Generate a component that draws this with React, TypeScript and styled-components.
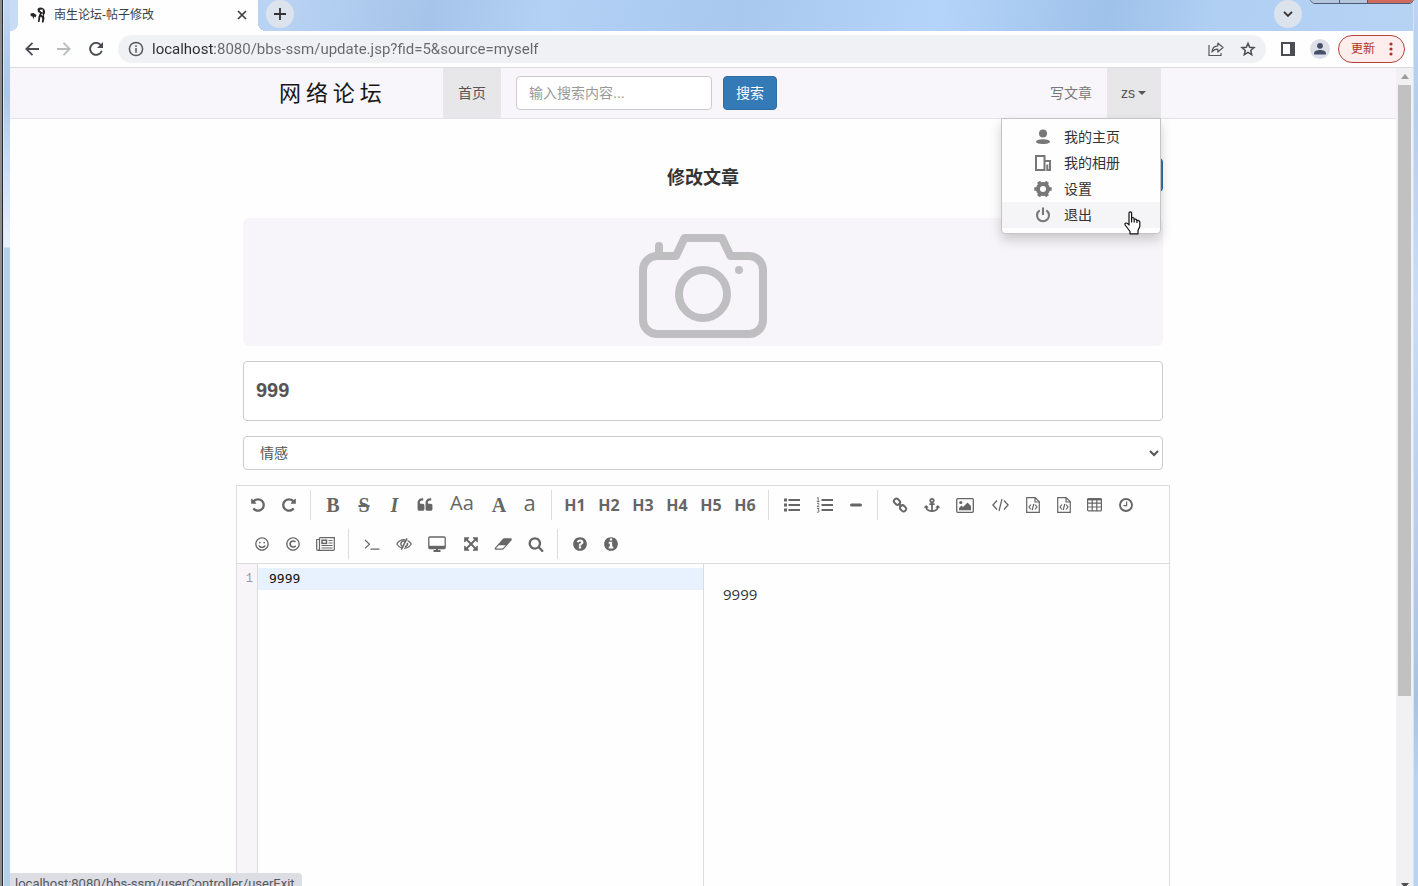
import React from "react";
import styled, { createGlobalStyle } from "styled-components";
import { FaAnchor, FaRegSmile, FaRegCopyright } from "react-icons/fa";

const sans = `"Open Sans", "Noto Sans CJK SC", sans-serif`;
const chrome = `Roboto, "Noto Sans CJK SC", sans-serif`;
const helvetica = `"Liberation Sans", "Noto Sans CJK SC", sans-serif`;

const GlobalStyle = createGlobalStyle`
  *, *::before, *::after { box-sizing: border-box; }
  body {
    margin: 0;
    overflow: hidden;
    font-family: ${helvetica};
    font-size: 14px;
    line-height: 20px;
    color: #333;
  }
  button, input, select, textarea { font: inherit; color: inherit; }
  button { border: 0; padding: 0; background: none; cursor: pointer; }
  a { color: inherit; text-decoration: none; }
  svg { display: block; flex: none; }
`;

/* ---------- desktop and browser frame ---------- */

const Desktop = styled.div`
  display: grid;
  grid-template-columns: 10px minmax(0, 1fr) 5px;
  height: 100vh;
  overflow: hidden;
  background: #b9d3f2;
`;

const LeftEdge = styled.div`
  display: grid;
  grid-template-columns: 2px 1px 1px 1fr;
  & > :nth-child(1) { background: #8c8c8e; }
  & > :nth-child(2) { background: #26282c; }
  & > :nth-child(3) { background: #dfe9f5; }
  & > :nth-child(4) {
    background: linear-gradient(#c3d8f4 0, #aac6e8 90px, #c9dcf6 160px, #e9f1fd 247px, #b5d0ea 248px);
  }
`;

const RightEdge = styled.div`
  background: linear-gradient(#bcd5f5 0, #b4cdee 110px, #c9ddf7 300px, #a9c2e4 700px, #bad2f3 780px);
  border-left: 1px solid #d4e3f6;
`;

const Browser = styled.div`
  display: flex;
  flex-direction: column;
  min-width: 0;
  min-height: 0;
  position: relative;
`;

const TabStrip = styled.div`
  display: flex;
  flex: none;
  height: 31px;
  padding: 0 111px 3px 8px;
  background: linear-gradient(100deg, #c9dcf5 0, #b7d2f3 20%, #a6c4e9 30%, #b3d1f5 38%, #a9c8ee 52%, #b5d4f9 66%, #9fc2ea 78%, #b0cff3 86%, #b7d3f4 100%);
`;

const Tab = styled.div`
  display: flex;
  align-items: center;
  position: relative;
  width: 240px;
  height: 31px;
  padding: 0 10px 2px 12px;
  gap: 8px;
  background: #fefefe;
  font-size: 12px;
  color: #3c4043;
  &::before, &::after {
    content: "";
    position: absolute;
    bottom: 0;
    width: 8px;
    height: 8px;
  }
  &::before { left: -8px; background: radial-gradient(circle at 0 0, transparent 8px, #fefefe 8px); }
  &::after { right: -8px; background: radial-gradient(circle at 100% 0, transparent 8px, #fefefe 8px); }
`;

const TabTitle = styled.span`
  flex: 1;
  white-space: nowrap;
`;

const CloseTab = styled.button`
  width: 12px;
  height: 12px;
`;

const RoundButton = styled.button<{ $push?: boolean }>`
  display: grid;
  place-items: center;
  width: 28px;
  height: 28px;
  margin-left: ${(p) => (p.$push ? "auto" : "8px")};
  border-radius: 50%;
  background: #dde3ed;
`;

const WindowControls = styled.div`
  display: flex;
  position: absolute;
  top: -14px;
  right: -1px;
  height: 18px;
  border: 1px solid #4b5b78;
  border-radius: 0 0 5px 5px;
  overflow: hidden;
`;

const WindowControl = styled.button<{ $wide?: boolean }>`
  width: ${(p) => (p.$wide ? 46 : 28)}px;
  background: ${(p) => (p.$wide ? "#cf6a5c" : "#b4c5dc")};
  & + & { border-left: 1px solid #4b5b78; }
`;

const Toolbar = styled.div`
  display: flex;
  align-items: center;
  flex: none;
  height: 37px;
  padding: 0 8px 0 12px;
  background: #fefefe;
  border-bottom: 1px solid #dcdce0;
`;

const NavButton = styled.button`
  display: grid;
  place-items: center;
  width: 20px;
  height: 20px;
  margin-right: 12px;
`;

const Omnibox = styled.div`
  display: flex;
  align-items: center;
  flex: 1;
  height: 28px;
  padding: 0 10px;
  gap: 8px;
  border-radius: 14px;
  background: #f0f1f4;
`;

const Address = styled.input`
  flex: 1;
  min-width: 0;
  height: 24px;
  padding: 0;
  border: 0;
  outline: 0;
  font-family: ${chrome};
  font-size: 15px;
  background: linear-gradient(90deg, #2a2c30 63px, #63676c 63px);
  -webkit-background-clip: text;
  background-clip: text;
  color: transparent;
`;

const ToolButton = styled.button`
  display: grid;
  place-items: center;
  width: 20px;
  height: 20px;
  margin-left: 12px;
`;

const OmniButton = styled.button`
  display: grid;
  place-items: center;
  width: 16px;
  height: 20px;
  margin-left: 8px;
`;

const UpdateButton = styled.button`
  display: flex;
  align-items: center;
  justify-content: space-between;
  width: 67px;
  height: 28px;
  margin-left: 8px;
  padding: 0 11px 0 12px;
  border: 1px solid #b5423c;
  border-radius: 14px;
  background: #fdeeed;
  color: #b3302a;
  font-size: 12px;
`;

const Viewport = styled.div`
  display: grid;
  grid-template-columns: minmax(0, 1fr) 17px;
  flex: 1;
  min-height: 0;
`;

const ScrollTrack = styled.div`
  display: flex;
  flex-direction: column;
  justify-content: space-between;
  align-items: center;
  margin-bottom: -8px;
  background: #f1f0f3;
`;

const ScrollThumb = styled.div`
  width: 13px;
  height: 74%;
  margin-bottom: auto;
  background: #c1c1c2;
`;

const ScrollArrow = styled.button`
  display: grid;
  place-items: center;
  width: 17px;
  height: 17px;
`;

const StatusBubble = styled.div`
  position: absolute;
  left: 0;
  bottom: -9px;
  height: 22px;
  padding: 0 7px 0 5px;
  border-radius: 0 4px 0 0;
  background: #dddee3;
  color: #55585d;
  font-family: ${chrome};
  font-size: 13px;
  line-height: 22px;
`;

const Pointer = styled.div`
  position: absolute;
  right: 19px;
  bottom: -2px;
  pointer-events: none;
`;

/* ---------- site ---------- */

const Page = styled.div`
  min-width: 0;
  overflow: hidden;
  background: #fefefe;
`;

const SiteNav = styled.nav`
  height: 51px;
  background: #f8f6fa;
  border-bottom: 1px solid #e4e2e8;
`;

const NavInner = styled.div`
  display: flex;
  align-items: center;
  max-width: 920px;
  height: 50px;
  margin: 0 auto;
  padding-right: 2px;
`;

const Brand = styled.a`
  width: 200px;
  padding: 0 0 4px 36px;
  font-family: "Noto Sans CJK SC", sans-serif;
  font-size: 22px;
  line-height: 46px;
  color: #161616;
`;

const NavLink = styled.a<{ $active?: boolean }>`
  padding: 0 15px;
  line-height: 50px;
  color: ${(p) => (p.$active ? "#555" : "#777")};
  background: ${(p) => (p.$active ? "#e7e6e8" : "transparent")};
`;

const SearchForm = styled.form`
  display: flex;
  flex: 1;
  gap: 11px;
  padding-left: 15px;
`;

const SearchInput = styled.input`
  width: 196px;
  height: 34px;
  padding: 0 12px;
  border: 1px solid #ccc;
  border-radius: 4px;
  background: #fff;
  &::placeholder { color: #999; }
`;

const PrimaryButton = styled.button`
  width: 54px;
  height: 34px;
  border: 1px solid #2e6da4;
  border-radius: 4px;
  background: #337ab7;
  color: #fff;
`;

const Account = styled.div`
  position: relative;
`;

const AccountButton = styled.button`
  display: flex;
  align-items: center;
  justify-content: center;
  gap: 3px;
  width: 54px;
  height: 50px;
  padding-right: 1px;
  background: #e7e6e8;
  color: #555;
`;

const Caret = styled.span`
  border: 4px solid transparent;
  border-top-color: currentColor;
  border-bottom: 0;
`;

const Menu = styled.div`
  position: absolute;
  z-index: 2;
  top: 50px;
  right: 0;
  width: 160px;
  padding: 5px 0;
  border: 1px solid #c4c4c6;
  border-radius: 0 0 4px 4px;
  background: #fefefe;
  box-shadow: 0 6px 12px rgba(0, 0, 0, 0.18);
`;

const MenuItem = styled.a<{ $hover?: boolean }>`
  display: flex;
  align-items: center;
  gap: 12px;
  height: 26px;
  padding-left: 32px;
  background: ${(p) => (p.$hover ? "#f5f4f6" : "transparent")};
`;

const MenuIcon = styled.span`
  display: grid;
  place-items: center;
  width: 18px;
`;

const Main = styled.main`
  display: flex;
  flex-direction: column;
  max-width: 934px;
  margin: 0 auto;
  padding-top: 39px;
`;

const Fields = styled.form`
  display: flex;
  flex-direction: column;
  gap: 15px;
  padding: 0 7px;
`;

const Heading = styled.div`
  display: grid;
  grid-template-columns: 1fr auto 1fr;
  align-items: center;
  height: 34px;
  margin-bottom: 11px;
  h1 {
    grid-column: 2;
    margin: 0;
    padding-top: 6px;
    font-size: 18px;
    line-height: 24px;
  }
  button { justify-self: end; }
`;

const Cover = styled.button`
  display: flex;
  justify-content: center;
  height: 128px;
  border-radius: 6px;
  background: #f7f5f9;
`;

const TitleInput = styled.input`
  height: 60px;
  padding: 0 12px 2px;
  border: 1px solid #ccc;
  border-radius: 4px;
  background: #fff;
  color: #555;
  font-size: 20px;
  font-weight: bold;
`;

const CategorySelect = styled.select`
  height: 34px;
  padding: 0 12px;
  border: 1px solid #ccc;
  border-radius: 4px;
  background: #fff;
  color: #555;
`;

const Editor = styled.section`
  margin-top: 15px;
  border: 1px solid #ddd;
`;

const Tools = styled.div`
  height: 77px;
`;

const ToolRow = styled.div<{ $indent: number }>`
  display: flex;
  height: 39px;
  padding: 4px 0 0 ${(p) => p.$indent}px;
  color: #666;
`;

const Divider = styled.span`
  width: 1px;
  height: 30px;
  margin: 0 6px;
  background: #ddd;
`;

type Face = "head" | "serif" | "strike" | "italic" | "case" | "lower";

const faces: Record<Face, string> = {
  head: `font: bold 16px/30px ${sans};`,
  serif: `font: bold 20px/30px "Liberation Serif", serif;`,
  strike: `font: bold 20px/30px "Liberation Serif", serif; text-decoration: line-through;`,
  italic: `font: italic bold 20px/30px "Liberation Serif", serif;`,
  case: `font: 20px/26px ${sans}; padding-bottom: 4px;`,
  lower: `font: 22px/24px ${sans}; padding-bottom: 6px;`,
};

const EditorButton = styled.button<{ $w: number; $face?: Face }>`
  display: flex;
  align-items: center;
  justify-content: center;
  width: ${(p) => p.$w}px;
  height: 30px;
  ${(p) => (p.$face ? faces[p.$face] : "")}
`;

const Panes = styled.div`
  display: grid;
  grid-template-columns: calc(50% + 1px) 1fr;
  height: 600px;
  border-top: 1px solid #ddd;
`;

const CodePane = styled.div`
  display: grid;
  grid-template-columns: 21px 1fr;
  border-right: 1px solid #ddd;
`;

const Gutter = styled.div`
  padding: 4px 4px 0 0;
  border-right: 1px solid #ddd;
  background: #f7f5f8;
  color: #999;
  font: 12px/22px "Liberation Mono", monospace;
  text-align: right;
`;

const Code = styled.textarea`
  width: 100%;
  height: 100%;
  padding: 4px 11px;
  border: 0;
  outline: 0;
  resize: none;
  background: linear-gradient(#e8f1fe, #e8f1fe) 0 4px / 100% 22px no-repeat;
  color: #111;
  font: 13px/22px "DejaVu Sans Mono", monospace;
`;

const Preview = styled.article`
  padding: 19px;
  font-family: ${sans};
  font-size: 15px;
  p { margin: 0; line-height: 22px; }
`;

/* ---------- icons ---------- */

const Fa = ({ d, w = 16, box = 1792 }: { d: string; w?: number; box?: number }) => (
  <svg width={w} height={16} viewBox={`0 0 ${box} 1792`} fill="currentColor"><path d={d} /></svg>
);

const Line = ({ w = 18, h = 16, sw = 1.4, children }: { w?: number; h?: number; sw?: number; children: React.ReactNode }) => (
  <svg width={w} height={h} viewBox={`0 0 ${w} ${h}`} fill="none" stroke="currentColor" strokeWidth={sw}>{children}</svg>
);

const circle = "m640 416q0 209-103 385.5t-279.5 279.5-385.5 103-385.5-103-279.5-279.5-103-385.5 103-385.5 279.5-279.5 385.5-103 385.5 103 279.5 279.5 103 385.5z";
const quoteTail = "q0-104 40.5-198.5t109.5-163.5 163.5-109.5 198.5-40.5h64q26 0 45 19t19 45v128q0 26-19 45t-45 19h-64q-106 0-181 75t-75 181v32q0 40 28 68t68 28h224q80 0 136 56t56 136z";
const paths = {
  undo: "M1664 896q0 156-61 298t-164 245-245 164-298 61q-172 0-327-72.5t-264-204.5q-7-10-6.5-22.5t8.5-20.5l137-138q10-9 25-9 16 2 23 12 73 95 179 147t225 52q104 0 198.5-40.5t163.5-109.5 109.5-163.5 40.5-198.5-40.5-198.5-109.5-163.5-163.5-109.5-198.5-40.5q-98 0-188 35.5t-160 101.5l137 138q31 30 14 69-17 40-59 40h-448q-26 0-45-19t-19-45v-448q0-42 40-59 39-17 69 14l130 129q107-101 244.5-156.5t284.5-55.5q156 0 298 61t245 164 164 245 61 298z",
  redo: "M1664 256v448q0 26-19 45t-45 19h-448q-42 0-59-40-17-39 14-69l138-138q-148-137-349-137-104 0-198.5 40.5t-163.5 109.5-109.5 163.5-40.5 198.5 40.5 198.5 109.5 163.5 163.5 109.5 198.5 40.5q119 0 225-52t179-147q7-10 23-12 15 0 25 9l137 138q9 8 9.5 20.5t-7.5 22.5q-109 132-264 204.5t-327 72.5q-156 0-298-61t-245-164-164-245-61-298 61-298 164-245 245-164 298-61q147 0 284.5 55.5t244.5 156.5l130-129q29-31 70-14 39 17 39 59z",
  quote: `M832 960v384q0 80-56 136t-136 56h-384q-80 0-136-56t-56-136v-704${quoteTail}m896 0v384q0 80-56 136t-136 56h-384q-80 0-136-56t-56-136v-704${quoteTail}`,
  question: "M1024 1376v-192q0-14-9-23t-23-9h-192q-14 0-23 9t-9 23v192q0 14 9 23t23 9h192q14 0 23-9t9-23zm256-672q0-88-55.5-163t-138.5-116-170-41q-243 0-371 213-15 24 8 42l132 100q7 6 19 6 16 0 25-12 53-68 86-92 34-24 86-24 48 0 85.5 26t37.5 59q0 38-20 61t-68 45q-63 28-115.5 86.5t-52.5 125.5v36q0 14 9 23t23 9h192q14 0 23-9t9-23q0-19 21.5-49.5t54.5-49.5q32-18 49-28.5t46-35 44.5-48 28-60.5 12.5-81zm384 192q0 209-103 385.5t-279.5 279.5-385.5 103-385.5-103-279.5-279.5-103-385.5 103-385.5 279.5-279.5 385.5-103 385.5 103 279.5 279.5 103 385.5z",
  info: `M1152 1376v-160q0-14-9-23t-23-9h-96v-512q0-14-9-23t-23-9h-320q-14 0-23 9t-9 23v160q0 14 9 23t23 9h96v320h-96q-14 0-23 9t-9 23v160q0 14 9 23t23 9h448q14 0 23-9t9-23zm-128-896v-160q0-14-9-23t-23-9h-192q-14 0-23 9t-9 23v160q0 14 9 23t23 9h192q14 0 23-9t9-23z${circle}`,
  search: "M1216 832q0-185-131.5-316.5t-316.5-131.5-316.5 131.5-131.5 316.5 131.5 316.5 316.5 131.5 316.5-131.5 131.5-316.5zm512 832q0 52-38 90t-90 38q-54 0-90-38l-343-342q-179 124-399 124-143 0-273.5-55.5t-225-150-150-225-55.5-273.5 55.5-273.5 150-225 225-150 273.5-55.5 273.5 55.5 225 150 150 225 55.5 273.5q0 220-124 399l343 343q37 37 37 90z",
  expand: "M1411 541l-355 355 355 355 144-144q29-31 70-14 39 17 39 59v448q0 26-19 45t-45 19h-448q-42 0-59-40-17-39 14-69l144-144-355-355-355 355 144 144q31 30 14 69-17 40-59 40h-448q-26 0-45-19t-19-45v-448q0-42 40-59 39-17 69 14l144 144 355-355-355-355-144 144q-19 19-45 19-12 0-24-5-40-17-40-59v-448q0-26 19-45t45-19h448q42 0 59 40 17 39-14 69l-144 144 355 355 355-355-144-144q-31-30-14-69 17-40 59-40h448q26 0 45 19t19 45v448q0 42-39 59-13 5-25 5-26 0-45-19z",
  eraser: "M960 1408l336-384h-768l-336 384h768zm1013-1077q15 34 9.5 71.5t-30.5 65.5l-896 1024q-38 44-96 44h-768q-38 0-69.5-20.5t-47.5-54.5q-15-34-9.5-71.5t30.5-65.5l896-1024q38-44 96-44h768q38 0 69.5 20.5t47.5 54.5z",
};

const FileCode = () => (
  <Line w={14} h={16} sw={1.2}>
    <path d="M.7.7h8.5l4.1 4.1v10.5H.7zM9 .8V5h4.2M5 7.5 3 10l2 2.5M9 7.5l2 2.5-2 2.5M7.7 7l-1.4 6" />
  </Line>
);

const Camera = () => (
  <svg width="128" height="128" viewBox="0 0 128 128" fill="none" stroke="#bfbfc1" strokeWidth="8" strokeLinejoin="round" strokeLinecap="round">
    <path d="M20 34V28" />
    <path d="M18 38H37L45.500 20H83L91.500 38H110A14 14 0 0 1 124 52V102A14 14 0 0 1 110 116H18A14 14 0 0 1 4 102V52A14 14 0 0 1 18 38Z" />
    <circle cx="64" cy="76" r="24" />
    <circle cx="100" cy="52" r="4" fill="#bfbfc1" stroke="none" />
  </svg>
);

interface ToolDef { label: string; w: number; face?: Face; icon: React.ReactNode }

const firstRow: (ToolDef | null)[] = [
  { label: "撤销", w: 31, icon: <Fa d={paths.undo} /> },
  { label: "重做", w: 31, icon: <Fa d={paths.redo} /> },
  null,
  { label: "粗体", w: 32, face: "serif", icon: "B" },
  { label: "删除线", w: 30, face: "strike", icon: "S" },
  { label: "斜体", w: 31, face: "italic", icon: "I" },
  { label: "引用", w: 30, icon: <Fa d={paths.quote} /> },
  { label: "首字母大写", w: 44, face: "case", icon: "Aa" },
  { label: "大写", w: 30, face: "serif", icon: "A" },
  { label: "小写", w: 31, face: "lower", icon: "a" },
  null,
  ...[1, 2, 3, 4, 5, 6].map((n): ToolDef => ({ label: `标题${n}`, w: 34, face: "head", icon: `H${n}` })),
  null,
  { label: "无序列表", w: 34, icon: <Line sw={2}><path d="M5.500 3H17M5.500 8H17M5.500 13H17" /><path d="M1 3H4M1 8H4M1 13H4" strokeWidth="3" /></Line> },
  {
    label: "有序列表", w: 32,
    icon: (
      <Line sw={2}>
        <path d="M5.500 3H17M5.500 8H17M5.500 13H17" />
        <path d="M1 1 2.200.6V4.500M.8 4.500H3.500M1 6.500Q3.300 5.500 3 7.300L1 9.700H3.500M1 11.500H3L2 13Q4 13.500 2.800 15 1.800 15.700.8 15" strokeWidth=".9" />
      </Line>
    ),
  },
  { label: "横线", w: 30, icon: <Line w={12} sw={3}><path d="M1.500 8H10.500" strokeLinecap="round" /></Line> },
  null,
  { label: "链接", w: 32, icon: <Line w={16} sw={2}><rect x="1.700" y="2.200" width="6.500" height="5" rx="2.500" transform="rotate(45 5 4.700)" /><rect x="7.800" y="8.800" width="6.500" height="5" rx="2.500" transform="rotate(45 11 11.300)" /><path d="M6.500 6.500 9.500 9.500" /></Line> },
  { label: "锚点", w: 32, icon: <FaAnchor size={16} /> },
  {
    label: "图片", w: 34,
    icon: <Line w={18} h={15} sw={1.3}><rect x=".7" y=".7" width="16.600" height="13.600" rx="1" /><circle cx="4.800" cy="4.500" r="1.600" fill="currentColor" stroke="none" /><path d="M3 12.300V10L5.500 7.500 7 9l4.500-4.500L15 8v4.300z" fill="currentColor" stroke="none" /></Line>,
  },
  { label: "行内代码", w: 36, icon: <Line w={17} h={14} sw={1.3}><path d="M5 2.500.9 7 5 11.500M12 2.500 16.100 7 12 11.500M10 1 7 13" /></Line> },
  { label: "代码块", w: 30, icon: <FileCode /> },
  { label: "预格式文本", w: 31, icon: <FileCode /> },
  { label: "表格", w: 31, icon: <Line w={15} h={14} sw={1.2}><rect x=".6" y=".6" width="13.800" height="12.300" rx="1" /><path d="M.6 1.400H14.400" strokeWidth="2" /><path d="M.6 5.200H14.400M.6 9H14.400M5.200 1V13M9.800 1V13" /></Line> },
  { label: "日期时间", w: 32, icon: <Line w={14} h={14} sw={1.9}><circle cx="7" cy="7" r="6" /><path d="M7.600 3.500V7.600H4.500" strokeWidth="1.200" /></Line> },
];

const secondRow: (ToolDef | null)[] = [
  { label: "表情", w: 31, icon: <FaRegSmile size={14} /> },
  { label: "特殊字符", w: 31, icon: <FaRegCopyright size={14} /> },
  { label: "分页", w: 34, icon: <Line w={19} h={14} sw={1.200}><path d="M3.500.7H18.300V12.300Q18.300 13.300 17.300 13.300H2Q.7 13.300.7 12V2.500H3.500M3.500.7V12Q3.500 13.300 2 13.300M12.500 3.500H16.500M12.500 6H16.500M5.500 8.500H16.500M5.500 11H16.500" /><rect x="6" y="3.200" width="4.500" height="3.200" strokeWidth="1.500" /></Line> },
  null,
  { label: "跳转到行", w: 34, icon: <Line w={16} h={14} sw={1.200}><path d="M1 3 5.500 7.200 1 11.400M6.500 12.200H15.500" /></Line> },
  {
    label: "关闭预览", w: 30,
    icon: (
      <Line w={16} h={14} sw={1.200}>
        <path d="M9.300 2.800Q4 2 .8 7 2.800 10.200 5.800 11M11.500 3.500Q14 4.800 15.300 7 12.500 11.300 8 11.300" />
        <path d="M9.500 4.300Q5.500 3.200 4.800 6.800 4.900 8.500 6.300 9.500M11.500 5.800Q12 8.500 9 10" strokeWidth="1.400" />
        <path d="M11 1.300 5.300 12.700" strokeWidth="1.500" />
      </Line>
    ),
  },
  { label: "预览", w: 36, icon: <Line w={18} h={16} sw={1.300}><rect x=".8" y="1" width="16.400" height="11.500" rx="1" /><path d="M1 11.300H17" strokeWidth="3" /><path d="M9 12V14.500M5.500 15H12.500" strokeWidth="2" /></Line> },
  { label: "全屏", w: 31, icon: <Fa d={paths.expand} /> },
  { label: "清空", w: 34, icon: <Fa d={paths.eraser} w={18} box={1990} /> },
  { label: "搜索", w: 31, icon: <Fa d={paths.search} /> },
  null,
  { label: "帮助", w: 31, icon: <Fa d={paths.question} /> },
  { label: "关于", w: 31, icon: <Fa d={paths.info} /> },
];

const ToolbarRow = ({ tools, indent }: { tools: (ToolDef | null)[]; indent: number }) => (
  <ToolRow $indent={indent}>
    {tools.map((t, i) =>
      t ? <EditorButton key={i} type="button" aria-label={t.label} $w={t.w} $face={t.face}>{t.icon}</EditorButton> : <Divider key={i} />
    )}
  </ToolRow>
);

const menu = [
  { text: "我的主页", icon: <svg width="16" height="16" viewBox="0 0 16 16" fill="#777"><circle cx="8" cy="4.500" r="4" /><path d="M1 12.800C1 9.300 15 9.300 15 12.800 15 15.800 1 15.800 1 12.800Z" /></svg> },
  { text: "我的相册", icon: <svg width="16" height="16" viewBox="0 0 16 16" fill="none" stroke="#777" strokeWidth="2"><path d="M1 1H9.500V15H1ZM9.500 6H15V15H12.300V9.500" /></svg> },
  { text: "设置", icon: <svg width="18" height="16" viewBox="0 0 18 16" fill="none" stroke="#777"><circle cx="9" cy="8" r="5" strokeWidth="4" /><path d="M3 8H.3M15 8H17.700M6 3 4.600.7M12 3 13.400.7M6 13 4.600 15.300M12 13 13.400 15.300" strokeWidth="3.600" /></svg> },
  { text: "退出", icon: <svg width="16" height="16" viewBox="0 0 16 16" fill="none" stroke="#777" strokeWidth="2.100"><path d="M4.700 3.300A6 6 0 1 0 11.300 3.300M8 .5V8" /></svg> },
];

export default function App() {
  return (
    <>
      <GlobalStyle />
      <Desktop>
        <LeftEdge><i /><i /><i /><i /></LeftEdge>
        <Browser>
          <TabStrip>
            <Tab>
              <svg width="16" height="16" viewBox="0 0 16 16" fill="#222">
                <path d="M7.500 2Q9 .3 12 .7 15.500 2 15 6L13.800 8.500 14.500 11 13.500 15.500H11.800L12.300 11 10.500 9.500 9.500 15H8L8.500 9.500 10 6 8 5Z" />
                <path d="M.5 6.500 3.500 6 6.500 8 5.500 10.500 4 9.500 3.500 12.500 2.500 9.500.8 9Z" />
                <path d="M9.500 3 12.500 2.300 13 5.500 11 4.700ZM11 7 13 6.500 12.500 9Z" fill="#fff" />
              </svg>
              <TabTitle>南生论坛-帖子修改</TabTitle>
              <CloseTab aria-label="关闭标签页">
                <svg width="12" height="12" viewBox="0 0 12 12" stroke="#3c4043" strokeWidth="1.700"><path d="M2 2 10 10M10 2 2 10" /></svg>
              </CloseTab>
            </Tab>
            <RoundButton aria-label="新标签页">
              <svg width="12" height="12" viewBox="0 0 12 12" stroke="#333" strokeWidth="1.800"><path d="M6 0V12M0 6H12" /></svg>
            </RoundButton>
            <RoundButton $push aria-label="搜索标签页">
              <svg width="10" height="6" viewBox="0 0 10 6" fill="none" stroke="#333" strokeWidth="1.900"><path d="M1 .8 5 4.800 9 .8" /></svg>
            </RoundButton>
          </TabStrip>
          <WindowControls>
            <WindowControl aria-label="最小化" />
            <WindowControl aria-label="最大化" />
            <WindowControl $wide aria-label="关闭" />
          </WindowControls>

          <Toolbar>
            <NavButton aria-label="后退">
              <svg width="14" height="14" viewBox="0 0 14 14" fill="none" stroke="#4a4d51" strokeWidth="1.800"><path d="M14 7H1.500M7.500.8 1.300 7 7.500 13.200" /></svg>
            </NavButton>
            <NavButton aria-label="前进">
              <svg width="14" height="14" viewBox="0 0 14 14" fill="none" stroke="#b9bbbe" strokeWidth="1.800"><path d="M0 7H12.500M6.500.8 12.700 7 6.500 13.200" /></svg>
            </NavButton>
            <NavButton aria-label="重新加载">
              <svg width="14" height="14" viewBox="0 0 14 14" fill="none" stroke="#4a4d51" strokeWidth="1.900"><path d="M11.700 3A6 6 0 1 0 12.800 8.800" /><path d="M14 0V6H8Z" fill="#4a4d51" stroke="none" /></svg>
            </NavButton>
            <Omnibox>
              <svg width="16" height="16" viewBox="0 0 16 16" fill="none" stroke="#55585d" strokeWidth="1.500"><circle cx="8" cy="8" r="6.600" /><path d="M8 7V11.700M8 4.300V5.900" /></svg>
              <Address aria-label="地址" defaultValue="localhost:8080/bbs-ssm/update.jsp?fid=5&source=myself" />
              <OmniButton aria-label="分享">
                <svg width="16" height="16" viewBox="0 0 16 16" fill="none" stroke="#55585d" strokeWidth="1.200"><path d="M1 4V14.500H13V12" /><path d="M4 11Q4.300 5 9.800 4.800V2L15 6.500 9.800 11V8.200Q6 8 4 11Z" strokeLinejoin="round" /></svg>
              </OmniButton>
              <OmniButton aria-label="收藏">
                <svg width="16" height="16" viewBox="0 0 24 24" fill="none" stroke="#4a4d51" strokeWidth="2.200"><path d="M12 3.500 14.500 9.400 21 10 16.100 14.200 17.600 20.500 12 17.200 6.400 20.500 7.900 14.200 3 10 9.500 9.400Z" /></svg>
              </OmniButton>
            </Omnibox>
            <ToolButton aria-label="侧边栏">
              <svg width="14" height="14" viewBox="0 0 14 14"><rect x="1" y="1" width="12" height="12" fill="none" stroke="#4a4d51" strokeWidth="2" /><path d="M9 0H14V14H9Z" fill="#4a4d51" /></svg>
            </ToolButton>
            <ToolButton aria-label="用户">
              <svg width="20" height="20" viewBox="0 0 22 22"><circle cx="11" cy="11" r="11" fill="#dcdfe7" /><circle cx="11" cy="7.500" r="3.200" fill="#474f68" /><path d="M4.500 17V15.500C4.500 11 17.500 11 17.500 15.500V17Z" fill="#474f68" /></svg>
            </ToolButton>
            <UpdateButton>
              更新
              <svg width="4" height="14" viewBox="0 0 4 14" fill="currentColor"><circle cx="2" cy="2" r="1.600" /><circle cx="2" cy="7" r="1.600" /><circle cx="2" cy="12" r="1.600" /></svg>
            </UpdateButton>
          </Toolbar>

          <Viewport>
            <Page>
              <SiteNav>
                <NavInner>
                  <Brand href="#">网 络 论 坛</Brand>
                  <NavLink href="#" $active>首页</NavLink>
                  <SearchForm>
                    <SearchInput aria-label="搜索内容" placeholder="输入搜索内容..." />
                    <PrimaryButton type="button">搜索</PrimaryButton>
                  </SearchForm>
                  <NavLink href="#">写文章</NavLink>
                  <Account>
                    <AccountButton>zs<Caret /></AccountButton>
                    <Menu>
                      {menu.map((m, i) => (
                        <MenuItem key={m.text} href="#" $hover={i === 3}><MenuIcon>{m.icon}</MenuIcon>{m.text}</MenuItem>
                      ))}
                      <Pointer>
                        <svg width="17" height="24" viewBox="0 0 17 24" fill="#fff" stroke="#111" strokeWidth="1.200" strokeLinejoin="round">
                          <path d="M5 13.500V2.200Q5 .8 6.300.8T7.600 2.200V8 7Q10 6 10.200 8.300 12.600 7.500 12.900 9.500 15.800 8.900 15.800 11.500V15.500L14 19.500V22.800H6V20.500L1.200 14Q.3 12 2.200 12 3.500 12 5 14Z" />
                          <path d="M7.600 8V11.500M10.200 8.300V11.500M12.900 9.500V12" fill="none" />
                        </svg>
                      </Pointer>
                    </Menu>
                  </Account>
                </NavInner>
              </SiteNav>

              <Main>
                <Fields>
                  <Heading>
                    <h1>修改文章</h1>
                    <PrimaryButton type="button" aria-label="提交" />
                  </Heading>
                  <Cover type="button" aria-label="上传封面"><Camera /></Cover>
                  <TitleInput aria-label="标题" defaultValue="999" />
                  <CategorySelect aria-label="分类"><option>情感</option></CategorySelect>
                </Fields>
                <Editor>
                  <Tools>
                    <ToolbarRow tools={firstRow} indent={5} />
                    <ToolbarRow tools={secondRow} indent={9} />
                  </Tools>
                  <Panes>
                    <CodePane>
                      <Gutter>1</Gutter>
                      <Code aria-label="正文" defaultValue="9999" />
                    </CodePane>
                    <Preview><p>9999</p></Preview>
                  </Panes>
                </Editor>
              </Main>
            </Page>
            <ScrollTrack>
              <ScrollArrow aria-label="向上滚动"><svg width="8" height="5" viewBox="0 0 8 5"><path d="M4 0 8 5H0Z" fill="#9a9a9c" /></svg></ScrollArrow>
              <ScrollThumb />
              <ScrollArrow aria-label="向下滚动"><svg width="8" height="5" viewBox="0 0 8 5"><path d="M4 5 8 0H0Z" fill="#505052" /></svg></ScrollArrow>
            </ScrollTrack>
          </Viewport>
          <StatusBubble>localhost:8080/bbs-ssm/userController/userExit</StatusBubble>
        </Browser>
        <RightEdge />
      </Desktop>
    </>
  );
}
